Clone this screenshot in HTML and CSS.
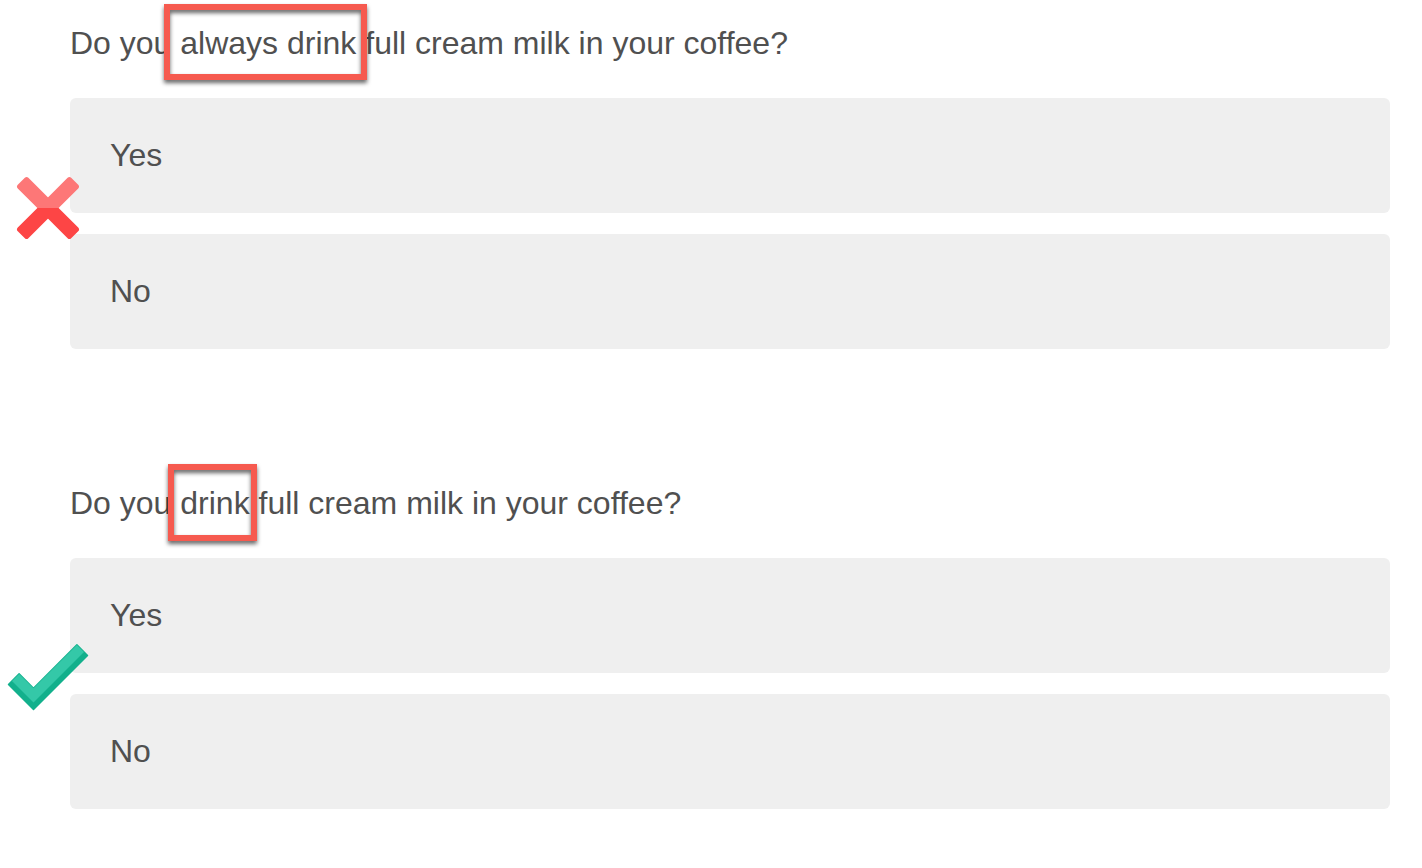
FILE: index.html
```html
<!DOCTYPE html>
<html lang="en">
<head>
<meta charset="utf-8">
<title>Question wording</title>
<link rel="stylesheet" href="styles.css">
</head>
<body>
<main class="quiz">
  <section class="question">
    <p class="prompt">Do you <span class="hl hl-wide">always drink</span> full cream milk in your coffee?</p>
    <div class="options">
      <div class="option">Yes</div>
      <div class="option">No</div>
      <svg class="mark mark-wrong" width="64" height="64" viewBox="0 0 64 64" aria-hidden="true">
        <defs>
          <clipPath id="x-top"><rect x="0" y="0" width="64" height="32"/></clipPath>
          <clipPath id="x-bottom"><rect x="0" y="32" width="64" height="32"/></clipPath>
        </defs>
        <g clip-path="url(#x-top)" fill="#fd7777">
          <rect x="-37.75" y="-7.5" width="75.5" height="15" rx="2.5" transform="translate(32 32) rotate(45)"/>
          <rect x="-37.75" y="-7.5" width="75.5" height="15" rx="2.5" transform="translate(32 32) rotate(-45)"/>
        </g>
        <g clip-path="url(#x-bottom)" fill="#fd4545">
          <rect x="-37.75" y="-7.5" width="75.5" height="15" rx="2.5" transform="translate(32 32) rotate(45)"/>
          <rect x="-37.75" y="-7.5" width="75.5" height="15" rx="2.5" transform="translate(32 32) rotate(-45)"/>
        </g>
      </svg>
    </div>
  </section>
  <section class="question">
    <p class="prompt">Do you <span class="hl hl-narrow">drink</span> full cream milk in your coffee?</p>
    <div class="options">
      <div class="option">Yes</div>
      <div class="option">No</div>
      <svg class="mark mark-right" width="90" height="76" viewBox="0 0 90 76" aria-hidden="true">
        <polygon fill="#12b08c" stroke="#12b08c" stroke-width="1.5" stroke-linejoin="round" points="4.5,44.5 15.1,33.9 29.5,48.3 72.9,4.9 83.5,15.5 29.5,69.5"/>
        <polygon fill="#34c8a8" points="4.5,44.5 15.1,33.9 29.5,48.3 72.9,4.9 80,12 29.5,62.4 8,41"/>
      </svg>
    </div>
  </section>
</main>
</body>
</html>
```
FILE: styles.css
```css
html, body {
  margin: 0;
  padding: 0;
  background: #ffffff;
}

body {
  font-family: "Liberation Sans", Arial, Helvetica, sans-serif;
  color: #505050;
}

.quiz {
  padding: 25px 32px 0 70px;
}

.question + .question {
  margin-top: 136px;
}

.prompt {
  margin: 0;
  font-size: 32px;
  line-height: 36px;
}

.hl {
  position: relative;
}

.hl::after {
  content: "";
  position: absolute;
  top: -21px;
  border: 6px solid #f65a4f;
  filter: drop-shadow(0 3px 2px rgba(0, 0, 0, 0.6));
  pointer-events: none;
}

.hl-wide::after {
  left: -16px;
  right: -11px;
  bottom: -19px;
}

.hl-narrow::after {
  left: -12px;
  right: -7px;
  bottom: -20px;
}

.options {
  position: relative;
  margin-top: 37px;
  display: flex;
  flex-direction: column;
  gap: 21px;
}

.option {
  height: 115px;
  box-sizing: border-box;
  padding-left: 40px;
  display: flex;
  align-items: center;
  background: #efefef;
  border-radius: 6px;
  font-size: 32px;
}

.mark {
  position: absolute;
  display: block;
}

.mark-wrong {
  left: -54px;
  top: 78px;
}

.mark-right {
  left: -66px;
  top: 82px;
}
```
